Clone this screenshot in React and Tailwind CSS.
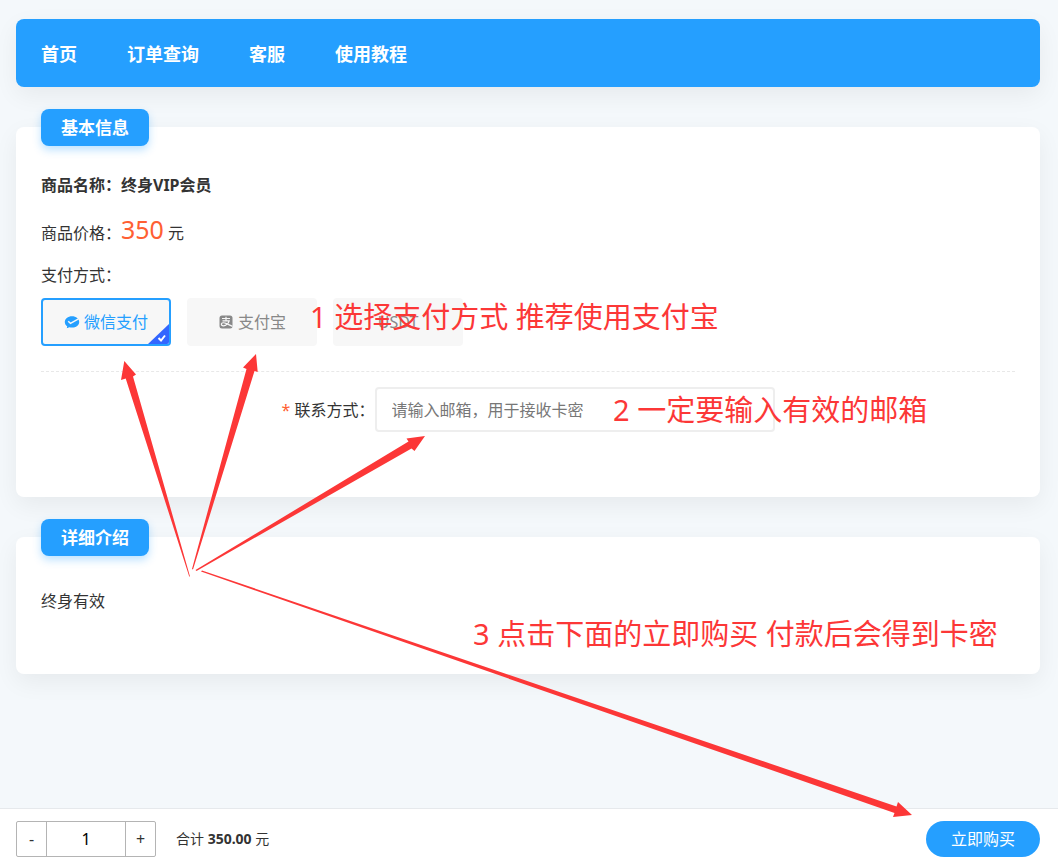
import { useState } from 'react'

const NAV_LINKS = ['首页', '订单查询', '客服', '使用教程']

const PAY_METHODS = [
  { id: 'wechat', label: '微信支付', Icon: WechatPayIcon },
  { id: 'alipay', label: '支付宝', Icon: AlipayIcon },
  { id: 'usdt', label: 'USDT' },
]

const PRICE = 350

function WechatPayIcon() {
  return (
    <svg viewBox="0 0 16 16" className="h-4 w-4" fill="currentColor" aria-hidden="true">
      <path d="M8 2.200C3.900 2.200.8 4.800.8 8c0 1.800.9 3.300 2.400 4.300L2.800 14.300l2.500-1.100c.8.300 1.700.4 2.700.4 4.100 0 7.200-2.500 7.200-5.700S12.100 2.200 8 2.200z" />
      <path d="M4.200 7.300l2.300 2.100 8-4.500" fill="none" stroke="#f7f7f7" strokeWidth="1.500" />
    </svg>
  )
}

function AlipayIcon() {
  return (
    <svg viewBox="0 0 16 16" className="h-4 w-4" aria-hidden="true">
      <rect x="1.500" y="1.500" width="13" height="13" rx="2.500" fill="currentColor" />
      <g fill="none" stroke="#f7f7f7" strokeWidth="1.200">
        <path d="M4 4.500h8M8 2.700v4M4.500 6.800h6.700C10.500 9 8.200 11.800 5.500 11.800c-1.600 0-2.300-.9-2.100-1.800.3-1.500 2.600-1.600 4.600-.6l6.500 3" />
      </g>
    </svg>
  )
}

function Card({ title, children, className }) {
  return (
    <section className={`flow-root rounded-lg bg-white px-[25px] shadow-[0_8px_24px_rgba(0,0,0,0.06)] ${className}`}>
      <h2 className="-mt-[18px] w-fit rounded-lg bg-[#259fff] px-5 py-1.5 text-[17px] leading-[25px] font-bold text-white shadow-[0_4px_8px_rgba(37,159,255,0.3)]">
        {title}
      </h2>
      {children}
    </section>
  )
}

function PayOption({ method, checked, onChange }) {
  const { id, label, Icon } = method
  return (
    <label
      className={`relative flex h-12 w-[130px] cursor-pointer items-center justify-center gap-1 overflow-hidden rounded border-2 bg-[#f7f7f7] ${
        checked ? 'border-[#259fff] text-[#259fff]' : 'border-[#f7f7f7] text-[#888]'
      }`}
    >
      <input
        type="radio"
        name="pay"
        value={id}
        checked={checked}
        onChange={() => onChange(id)}
        className="sr-only"
      />
      {Icon && <Icon />}
      {label}
      {checked && (
        <svg viewBox="0 0 21 20" className="absolute right-0 bottom-0 h-5 w-[21px]" aria-hidden="true">
          <path d="M21 0v20H0z" fill="#3366ff" />
          <path d="M10.500 14l2.500 2.500 4-5" fill="none" stroke="#fff" strokeWidth="2" />
        </svg>
      )}
    </label>
  )
}

function Arrows() {
  return (
    <svg
      viewBox="0 0 1058 867"
      className="pointer-events-none absolute top-0 left-0 z-20 h-[867px] w-[1058px]"
      fill="#fc3737"
      aria-hidden="true"
    >
      <path d="M124.300 361L136 374.500L133 376.600L190 576.500H189.200L125.700 378.500L121 380Z" />
      <path d="M256 354L257.700 372L254.500 371L193 569.500L192 569L246.500 369L243 367.500Z" />
      <path d="M425 436L414.500 451L411.500 448.500L196.500 571L195.500 570L408.500 441.500L406.500 438.500Z" />
      <path d="M912 815L898 802L896.500 806.500L202 570.500L201 571.500L894.500 813L893 817Z" />
    </svg>
  )
}

export default function App() {
  const [method, setMethod] = useState('wechat')
  const [count, setCount] = useState(1)

  return (
    <div className="relative min-h-screen overflow-x-hidden bg-[#f4f8fb] px-4 pt-[19px] pb-16 font-['Noto_Sans','Noto_Sans_CJK_SC',sans-serif] text-base text-[#333]">
      <nav className="mr-0.5 flex h-[68px] items-center gap-[50px] rounded-lg bg-[#259fff] px-[25px] pt-0.5 text-lg font-bold text-white shadow-[0_8px_24px_rgba(0,0,0,0.06)]">
        {NAV_LINKS.map((text) => (
          <a key={text} href="#">{text}</a>
        ))}
      </nav>

      <main className="mr-0.5">
        <Card title="基本信息" className="mt-10 pb-[65px]">
          <p className="mt-[27px] leading-6 font-bold">商品名称：终身VIP会员</p>
          <p className="mt-4 leading-8">
            商品价格：<span className="text-[25px] text-[#ff5f33]">350</span> 元
          </p>
          <fieldset className="mt-3.5">
            <legend className="leading-6">支付方式：</legend>
            <div className="mt-[11px] flex gap-4">
              {PAY_METHODS.map((item) => (
                <PayOption key={item.id} method={item} checked={method === item.id} onChange={setMethod} />
              ))}
            </div>
          </fieldset>
          <div className="mt-[25px] flex items-center justify-center border-t border-dashed border-[#e8e8e8] pt-[15px]">
            <label htmlFor="contact">
              <span className="text-[#ff5f33]">*</span> 联系方式：
            </label>
            <input
              id="contact"
              type="text"
              placeholder="请输入邮箱，用于接收卡密"
              className="h-[45px] w-[400px] rounded border-2 border-[#eee] px-[15px] outline-none placeholder:text-[#777]"
            />
          </div>
        </Card>

        <Card title="详细介绍" className="mt-10 pb-[61px]">
          <p className="mt-[33px] leading-6">终身有效</p>
        </Card>
      </main>

      <footer className="fixed inset-x-0 bottom-0 flex h-[59px] items-center justify-between border-t border-[#e6e9ec] bg-white pt-0.5 pr-[18px] pl-4">
        <div className="flex items-center gap-5">
          <div className="flex h-9 w-[140px] rounded-xs border border-[#b4b4b4]">
            <button type="button" aria-label="减少" className="w-[29px]" onClick={() => setCount(Math.max(1, count - 1))}>-</button>
            <input
              type="text"
              aria-label="数量"
              value={count}
              onChange={(e) => setCount(Number(e.target.value) || 1)}
              className="min-w-0 flex-1 border-x border-[#b4b4b4] text-center text-black outline-none"
            />
            <button type="button" aria-label="增加" className="w-[29px]" onClick={() => setCount(count + 1)}>+</button>
          </div>
          <p className="text-sm">
            合计 <strong>{(PRICE * count).toFixed(2)}</strong> 元
          </p>
        </div>
        <button type="button" className="h-9 rounded-full bg-[#259fff] px-[25px] text-white">立即购买</button>
      </footer>

      <div className="pointer-events-none absolute top-0 left-0 z-20 text-[29px] leading-10 whitespace-nowrap text-[#fc3737]">
        <p className="absolute top-[297px] left-[310px]">1 选择支付方式 推荐使用支付宝</p>
        <p className="absolute top-[390px] left-[613px]">2 一定要输入有效的邮箱</p>
        <p className="absolute top-[614px] left-[473px]">3 点击下面的立即购买 付款后会得到卡密</p>
      </div>
      <Arrows />
    </div>
  )
}
